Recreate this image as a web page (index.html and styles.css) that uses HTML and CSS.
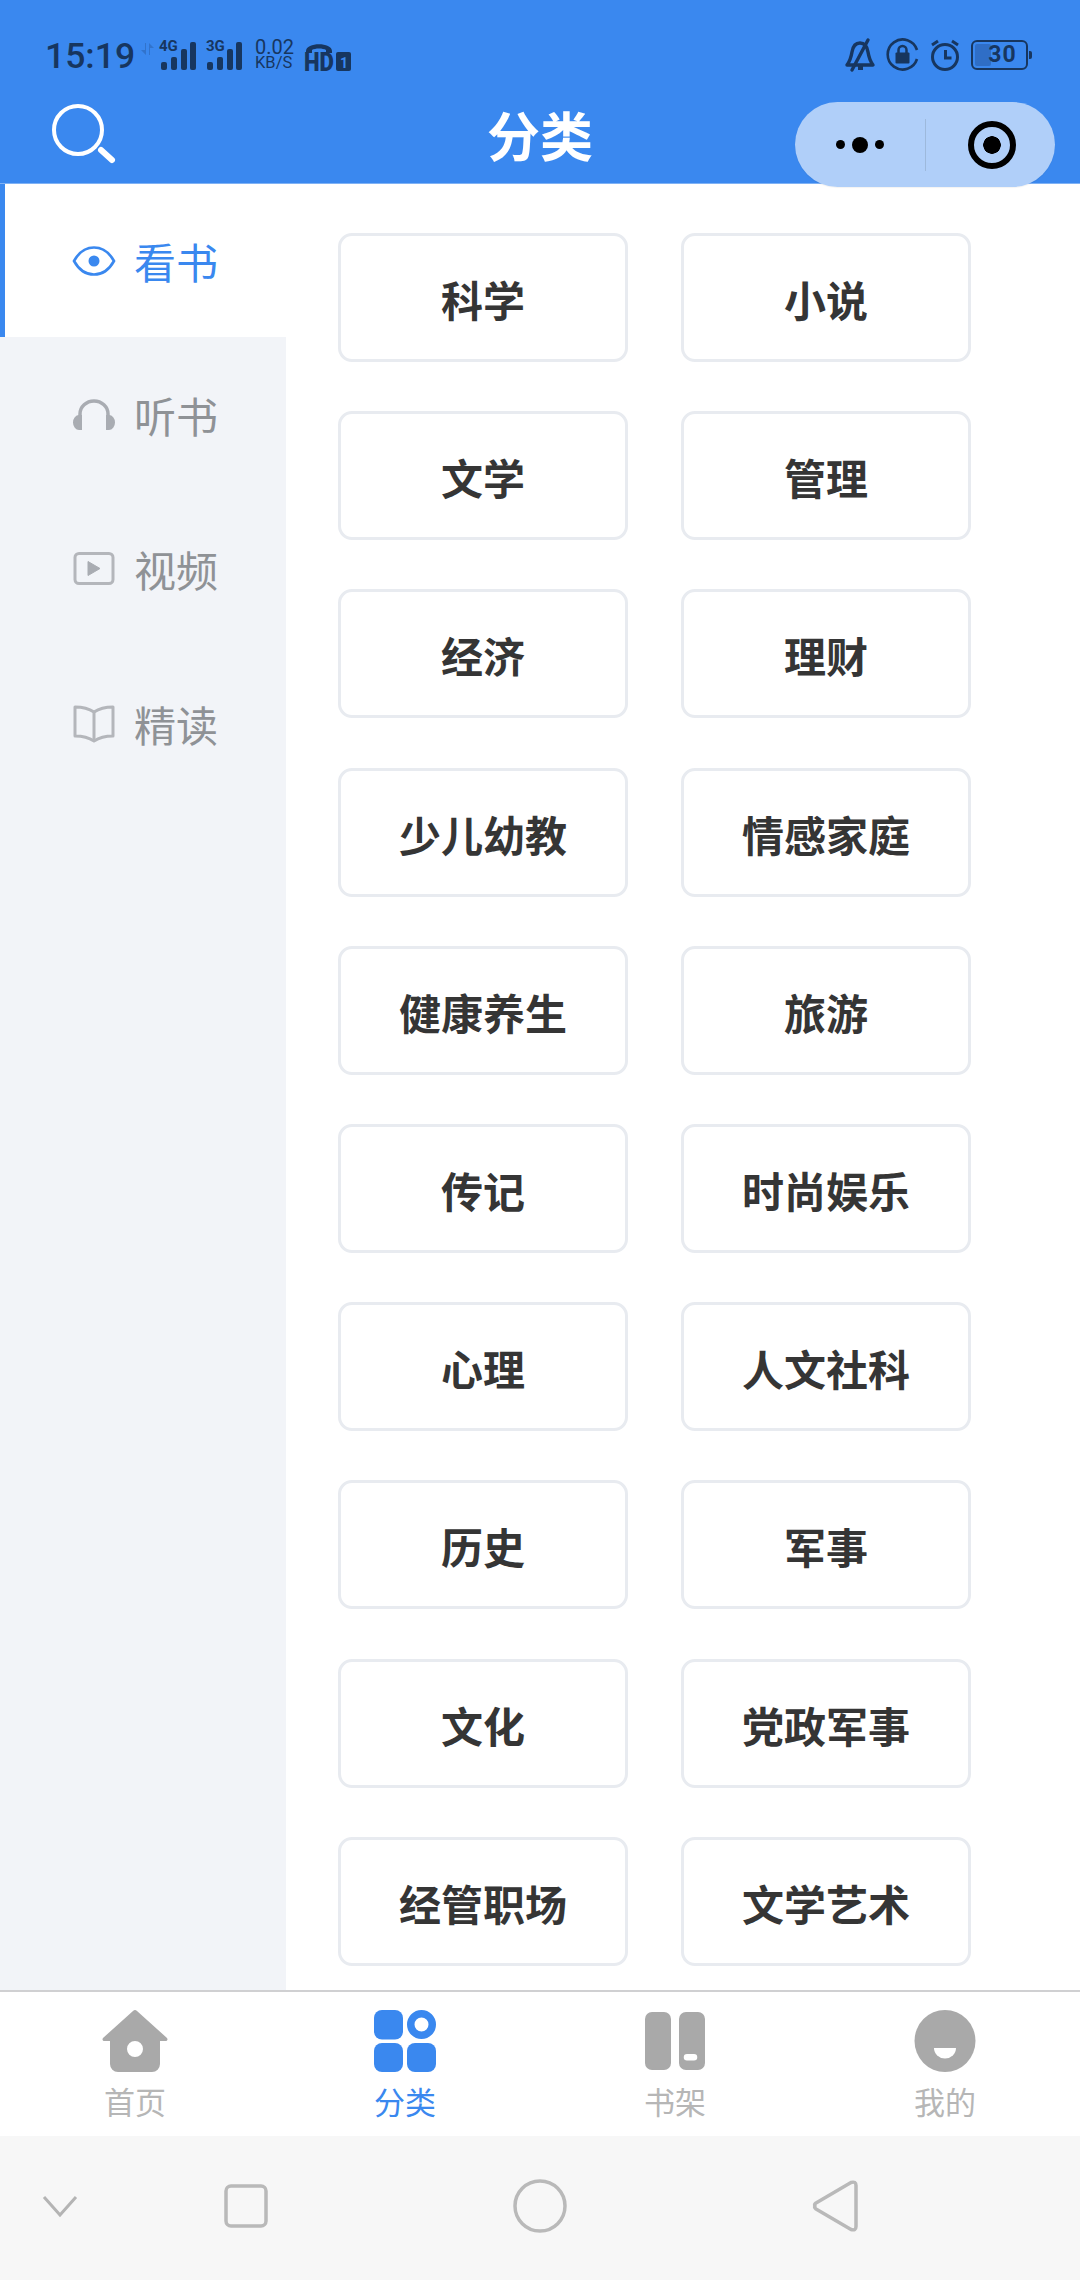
FILE: index.html
```html
<!DOCTYPE html>
<html lang="zh-CN">
<head>
<meta charset="utf-8">
<title>分类</title>
<link rel="stylesheet" href="styles.css">
</head>
<body>
<div class="app">
  <header class="topbar">
    <div class="status">
      <span class="time">15:19</span>
      <svg class="s-arrows" width="13" height="12" viewBox="0 0 13 12"><path d="M5 0v12L0 7h4V0zM8 0v12V0zM8 0l5 5H9v7H8z" fill="#2f6cc0"/></svg>
      <svg class="s-signal" width="38" height="32" viewBox="0 0 38 32"><text x="0" y="12" class="s-tiny">4G</text><rect x="2" y="23" width="6" height="8" rx="2"/><rect x="12" y="18" width="6" height="13" rx="2"/><rect x="22" y="10" width="6" height="21" rx="2"/><rect x="31" y="3" width="6" height="28" rx="2"/></svg>
      <svg class="s-signal2" width="38" height="32" viewBox="0 0 38 32"><text x="0" y="12" class="s-tiny">3G</text><rect x="1" y="23" width="6" height="8" rx="2"/><rect x="11" y="18" width="6" height="13" rx="2"/><rect x="21" y="10" width="6" height="21" rx="2"/><rect x="30" y="3" width="6" height="28" rx="2"/></svg>
      <div class="speed"><span class="speed-n">0.02</span><span class="speed-u">KB/S</span></div>
      <svg class="s-hd" width="48" height="33" viewBox="0 0 48 33"><path d="M2 12c0-9 26-9 26 0v2h-6v-3c-3-2-11-2-14 0v3H2z"/><text x="0" y="32" class="s-hdt" textLength="30" lengthAdjust="spacingAndGlyphs">HD</text><rect x="32" y="13" width="15" height="19" rx="2"/><text x="36" y="29" class="s-hd1">1</text></svg>
      <div class="status-right">
        <svg width="31" height="34" viewBox="0 0 31 34" fill="none" stroke="#17365f"><path d="M3 27c3-4 4-7 5-13 1-6 4-9 8-9s7 3 8 9c1 6 2 9 5 13z" stroke-width="3.4" stroke-linejoin="round"/><path d="M8 32L24 2" stroke-width="3.4" stroke-linecap="round"/><path d="M14 30h5" stroke-width="4"/></svg>
        <svg width="33" height="33" viewBox="0 0 33 33" fill="none"><path d="M31 21a15 15 0 1 1 0-9" stroke="#17365f" stroke-width="2.6"/><rect x="9.500" y="14.500" width="14" height="11" rx="1" fill="#17365f"/><path d="M12.500 15v-3a4 4 0 0 1 8 0v3" stroke="#17365f" stroke-width="2.500"/></svg>
        <svg width="30" height="33" viewBox="0 0 30 33" fill="none" stroke="#17365f"><circle cx="15" cy="19" r="12.500" stroke-width="3"/><path d="M15.500 12v8h6" stroke-width="3"/><path d="M2 7l6-4M28 7l-6-4" stroke-width="3"/></svg>
        <div class="battery"><div class="battery-body"><span class="battery-fill"></span><span class="battery-num">30</span></div><span class="battery-nub"></span></div>
      </div>
    </div>
    <div class="navrow">
      <svg class="search" width="66" height="60" viewBox="0 0 66 60" fill="none" stroke="#fff"><circle cx="27" cy="26" r="24" stroke-width="4"/><path d="M50 46l11 10" stroke-width="6" stroke-linecap="round"/></svg>
      <h1 class="title">分类</h1>
    </div>
  </header>

  <div class="capsule">
    <div class="capsule-more"><span class="dot"></span><span class="dot dot-big"></span><span class="dot"></span></div>
    <div class="capsule-close"><span class="target"></span></div>
  </div>

  <main class="main">
    <nav class="side">
      <a class="side-item is-active">
        <svg width="44" height="32" viewBox="0 0 44 32" fill="none"><path d="M2 16C7 7 14 2.500 22 2.500S37 7 42 16c-5 9-12 13.500-20 13.500S7 25 2 16z" stroke="#3a88ef" stroke-width="2.600"/><circle cx="22" cy="16" r="5.500" fill="#3a88ef"/></svg>
        <span>看书</span>
      </a>
      <a class="side-item">
        <svg width="44" height="32" viewBox="0 0 44 32" fill="none"><path d="M8 20v-5a14 13 0 0 1 28 0v5" stroke="#a9acb2" stroke-width="3.500"/><path d="M7 16h3v15H7a6 7.500 0 0 1 0-15zM37 16h-3v15h3a6 7.500 0 0 0 0-15z" fill="#a9acb2"/></svg>
        <span>听书</span>
      </a>
      <a class="side-item">
        <svg width="44" height="36" viewBox="0 0 44 36" fill="none"><rect x="3" y="2.500" width="38" height="30" rx="4" stroke="#b4b6bb" stroke-width="3"/><path d="M16 10.500v14l12-7z" fill="#a9acb2" stroke="#a9acb2" stroke-width="1" stroke-linejoin="round"/></svg>
        <span>视频</span>
      </a>
      <a class="side-item">
        <svg width="44" height="40" viewBox="0 0 44 40" fill="none" stroke="#b4b6bb" stroke-width="3" stroke-linejoin="round"><path d="M22 8C16 4 10 3 3 3v29c7 0 13 1 19 5 6-4 12-5 19-5V3c-7 0-13 1-19 5z"/><path d="M22 8v29"/></svg>
        <span>精读</span>
      </a>
    </nav>
    <section class="cats">
      <a class="cat">科学</a><a class="cat">小说</a>
      <a class="cat">文学</a><a class="cat">管理</a>
      <a class="cat">经济</a><a class="cat">理财</a>
      <a class="cat">少儿幼教</a><a class="cat">情感家庭</a>
      <a class="cat">健康养生</a><a class="cat">旅游</a>
      <a class="cat">传记</a><a class="cat">时尚娱乐</a>
      <a class="cat">心理</a><a class="cat">人文社科</a>
      <a class="cat">历史</a><a class="cat">军事</a>
      <a class="cat">文化</a><a class="cat">党政军事</a>
      <a class="cat">经管职场</a><a class="cat">文学艺术</a>
    </section>
  </main>

  <footer class="tabbar">
    <a class="tab">
      <svg width="66" height="62" viewBox="0 0 66 62"><path fill-rule="evenodd" fill="#a9a9a9" d="M31 1a3 3 0 0 1 4 0l30 27c1 1.500 .5 3-1.500 3H58v23a8 8 0 0 1-8 8H16a8 8 0 0 1-8-8V31H2.500C.5 31 0 29.500 1 28zM33 31a8 8 0 1 0 0 16 8 8 0 0 0 0-16z"/></svg>
      <span>首页</span>
    </a>
    <a class="tab is-active">
      <svg width="62" height="62" viewBox="0 0 62 62" fill="#3a88ef"><rect x="0" y="0" width="29" height="29.500" rx="8"/><rect x="0" y="33" width="29" height="29" rx="8"/><rect x="33" y="33" width="29" height="29" rx="8"/><path fill-rule="evenodd" d="M47.500 0a14.500 14.500 0 1 0 0 29 14.500 14.500 0 0 0 0-29zm0 7.500a7 7 0 1 1 0 14 7 7 0 0 1 0-14z"/></svg>
      <span>分类</span>
    </a>
    <a class="tab">
      <svg width="62" height="62" viewBox="0 0 62 62" fill="#a9a9a9"><rect x="1" y="2" width="26" height="58" rx="7"/><path fill-rule="evenodd" d="M42 2h12a7 7 0 0 1 7 7v44a7 7 0 0 1-7 7H42a7 7 0 0 1-7-7V9a7 7 0 0 1 7-7zm1 42a3 3 0 0 0 0 6.500h7a3 3 0 0 0 0-6.500z"/></svg>
      <span>书架</span>
    </a>
    <a class="tab">
      <svg width="62" height="62" viewBox="0 0 62 62"><ellipse cx="31" cy="31" rx="30.500" ry="31" fill="#a9a9a9"/><path d="M20 38h22a11 10.500 0 0 1-22 0z" fill="#fff"/></svg>
      <span>我的</span>
    </a>
  </footer>

  <div class="sysnav">
    <svg width="34" height="22" viewBox="0 0 34 22" fill="none" stroke="#b4b4b4" stroke-width="3"><path d="M1 2l16 18L33 2"/></svg>
    <svg width="44" height="44" viewBox="0 0 44 44" fill="none" stroke="#b9b9b9" stroke-width="3.500"><rect x="2" y="2" width="40" height="40" rx="5"/></svg>
    <svg width="54" height="54" viewBox="0 0 54 54" fill="none" stroke="#b9b9b9" stroke-width="3.500"><circle cx="27" cy="27" r="25"/></svg>
    <svg width="46" height="52" viewBox="0 0 46 52" fill="none" stroke="#b9b9b9" stroke-width="3.500" stroke-linejoin="round"><path d="M3 26q-1-1.500 1-3L39 2.500q5-1.500 5 3v41q0 4.500-5 3L4 29q-2-1.500-1-3z"/></svg>
  </div>
</div>
</body>
</html>
```

FILE: styles.css
```css
* { box-sizing: border-box; }
html, body { margin: 0; padding: 0; }
body {
  width: 1080px;
  height: 2280px;
  overflow: hidden;
  background: #fff;
  font-family: "Noto Sans CJK SC", "Noto Sans", sans-serif;
}
.app {
  position: relative;
  width: 1080px;
  height: 2280px;
  display: flex;
  flex-direction: column;
}
svg { overflow: visible; }

/* top */
.topbar {
  flex: 0 0 184px;
  background: #3a88ef;
  border-bottom: 1px solid #7fb2f5;
  padding-top: 38px;
}
.status {
  height: 33px;
  display: flex;
  align-items: center;
  padding: 0 48px 0 45px;
  color: #17365f;
}
.time {
  font: 500 35.500px/33px Roboto, sans-serif;
  width: 96px;
  margin-top: 4px;
}
.s-arrows { opacity: .75; margin-bottom: 12px; }
.s-signal { fill: #17365f; margin-left: 5px; }
.s-signal2 { fill: #17365f; margin-left: 9px; }
.s-tiny { font: 700 15px Roboto, sans-serif; fill: #17365f; }
.speed {
  display: flex;
  flex-direction: column;
  margin-left: 11px;
  font-family: Roboto, sans-serif;
  font-weight: 400;
}
.speed-n { font-size: 20px; line-height: 16px; }
.speed-u { font-size: 16.500px; line-height: 15px; }
.s-hd { fill: #17365f; margin-left: 10px; margin-top: 1px; }
.s-hdt { font: 900 26px Roboto, sans-serif; fill: #17365f; }
.s-hd1 { font: 700 14px Roboto, sans-serif; fill: #3a88ef; }
.status-right {
  margin-left: auto;
  display: flex;
  align-items: center;
  gap: 11px;
}
.battery { display: flex; align-items: center; }
.battery-body {
  position: relative;
  width: 57px;
  height: 30px;
  border: 2.500px solid #17365f;
  border-radius: 6px;
  display: flex;
  align-items: center;
  justify-content: center;
}
.battery-fill {
  position: absolute;
  left: 2px;
  top: 2px;
  bottom: 2px;
  width: 16px;
  background: #2f6ec6;
  border-radius: 2px;
}
.battery-num {
  position: relative;
  font: 700 23px/1 Roboto, sans-serif;
  letter-spacing: 1px;
  padding-left: 6px;
}
.battery-nub {
  width: 3px;
  height: 8px;
  background: #17365f;
  margin-left: 1px;
  border-radius: 0 2px 2px 0;
}

.navrow {
  display: grid;
  grid-template-columns: 1fr auto 1fr;
  align-items: center;
  padding-top: 14px;
  height: 112px;
}
.search { margin: 0 0 0 51px; }
.title {
  margin: 0;
  font-size: 53px;
  line-height: 72px;
  font-weight: 700;
  color: #fff;
  grid-column: 2;
}

/* capsule over the bar */
.capsule {
  position: absolute;
  left: 795px;
  top: 102px;
  width: 260px;
  height: 85px;
  border-radius: 43px;
  background: #b0cff9;
  box-shadow: 0 1px 1px rgba(0,0,0,.05);
  display: flex;
  align-items: center;
}
.capsule-more {
  flex: 0 0 131px;
  height: 52px;
  border-right: 1px solid #9db9dc;
  display: flex;
  align-items: center;
  justify-content: center;
  gap: 7px;
}
.dot { width: 9px; height: 9px; border-radius: 50%; background: #000; }
.dot-big { width: 16px; height: 16px; }
.capsule-close { flex: 1; display: flex; justify-content: center; padding-left: 3px; }
.target {
  width: 48px;
  height: 48px;
  border: 6px solid #000;
  border-radius: 50%;
  background: radial-gradient(circle, #000 0 8.500px, transparent 9px);
}

/* main */
.main {
  flex: 0 0 1806px;
  display: flex;
  overflow: hidden;
}
.side {
  flex: 0 0 286px;
  background: #f2f4f8;
}
.side-item {
  height: 154.500px;
  display: flex;
  align-items: center;
  gap: 18px;
  padding: 1px 0 0 72px;
  font-size: 42px;
  color: #8f9296;
}
.side-item span { line-height: 56px; }
.side-item.is-active {
  height: 153px;
  background: #fff;
  color: #3a88ef;
  border-left: 5px solid #3a88ef;
  padding: 0 0 0 67px;
}
.cats {
  display: grid;
  grid-template-columns: 290px 290px;
  grid-auto-rows: 129px;
  column-gap: 53px;
  row-gap: 49.200px;
  padding: 49px 0 0 52px;
  align-content: start;
}
.cat {
  display: flex;
  align-items: center;
  justify-content: center;
  border: 3px solid #e8ebf0;
  border-radius: 14px;
  font-size: 42px;
  font-weight: 700;
  color: #353535;
  padding-top: 2px;
}

/* tabs */
.tabbar {
  flex: 0 0 146px;
  background: #fff;
  border-top: 2px solid #d0d0d2;
  display: grid;
  grid-template-columns: repeat(4, 1fr);
  padding-top: 18px;
}
.tab {
  display: flex;
  flex-direction: column;
  align-items: center;
  font-size: 31px;
  line-height: 42px;
  color: #b6b6b6;
}
.tab svg { display: block; margin-bottom: 8px; }
.tab.is-active { color: #3a88ef; }

.sysnav {
  flex: 1;
  background: #f7f7f7;
  display: flex;
  align-items: center;
  padding: 0 0 4px 43px;
  gap: 147px;
}
.sysnav svg:nth-child(n+3) { margin-left: 98px; }
```
